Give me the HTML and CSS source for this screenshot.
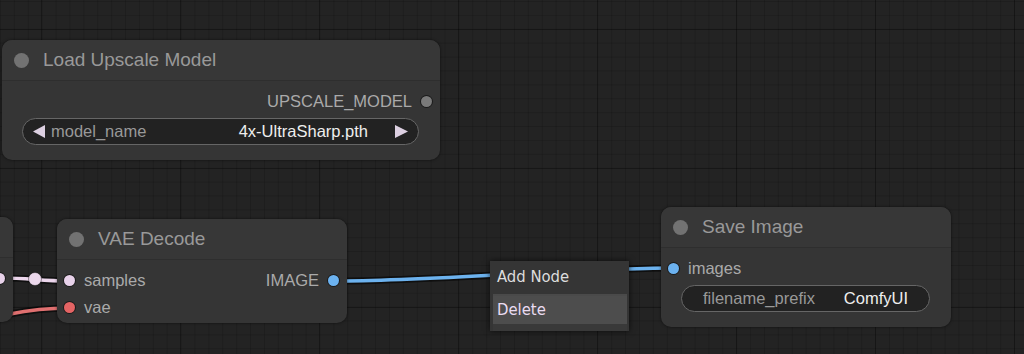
FILE: index.html
```html
<!DOCTYPE html>
<html lang="en">
  <head>
    <meta charset="UTF-8" />
    <meta name="viewport" content="width=device-width, initial-scale=1.0" />
    <title>ComfyUI Graph</title>
    <link rel="stylesheet" href="styles.css">
  </head>
  <body>
    <div class="canvas">
      <!-- links between node slots -->
      <svg class="links" width="1024" height="354" viewBox="0 0 1024 354">
        <path class="link-shadow" d="M 334 281 C 430 281, 580 268, 673 268" />
        <path class="link link-image" d="M 334 281 C 430 281, 580 268, 673 268" />
        <path class="link-shadow" d="M 1 278 C 30 278, 40 281, 69 281" />
        <path class="link link-latent" d="M 1 278 C 30 278, 40 281, 69 281" />
        <circle class="link-center" cx="35" cy="279" r="6.5" />
        <path class="link-shadow" d="M -90 340 C 0 314, 30 308, 69 308" />
        <path class="link link-vae" d="M -90 340 C 0 314, 30 308, 69 308" />
      </svg>

      <div class="node node-cut">
        <div class="node-title"></div>
        <div class="node-body">
          <div class="slot slot-out"><span class="dot dot-latent"></span></div>
        </div>
      </div>

      <div class="node node-upscale">
        <div class="node-title"><span class="title-dot"></span>Load Upscale Model</div>
        <div class="node-body">
          <div class="slot slot-out">UPSCALE_MODEL<span class="dot dot-grey"></span></div>
          <div class="widget combo">
            <svg class="arrow" width="12" height="13" viewBox="0 0 12 13"><polygon points="12,0 12,13 0,6.5" /></svg>
            <span class="w-label">model_name</span>
            <span class="w-value">4x-UltraSharp.pth</span>
            <svg class="arrow" width="13" height="13" viewBox="0 0 13 13"><polygon points="0,0 0,13 13,6.5" /></svg>
          </div>
        </div>
      </div>

      <div class="node node-vae">
        <div class="node-title"><span class="title-dot"></span>VAE Decode</div>
        <div class="node-body slots">
          <div class="slot-col">
            <div class="slot slot-in"><span class="dot dot-latent"></span>samples</div>
            <div class="slot slot-in"><span class="dot dot-vae"></span>vae</div>
          </div>
          <div class="slot-col">
            <div class="slot slot-out">IMAGE<span class="dot dot-image"></span></div>
          </div>
        </div>
      </div>

      <div class="node node-save">
        <div class="node-title"><span class="title-dot"></span>Save Image</div>
        <div class="node-body">
          <div class="slot slot-in"><span class="dot dot-image"></span>images</div>
          <div class="widget text">
            <span class="w-label">filename_prefix</span>
            <span class="w-value">ComfyUI</span>
          </div>
        </div>
      </div>

      <div class="context-menu">
        <div class="menu-item">Add Node</div>
        <div class="menu-item active">Delete</div>
      </div>
    </div>
  </body>
</html>
```

FILE: styles.css
```css
/* Canvas */
body {
  margin: 0;
  padding: 0;
  background-color: #222;
  font-family: "Liberation Sans", Arial, sans-serif;
  overflow: hidden;
}
.canvas {
  position: relative;
  width: 1024px;
  height: 354px;
  overflow: hidden;
  background-color: #232323;
  background-image:
    linear-gradient(90deg, rgba(0, 0, 0, 0.28) 1px, transparent 1px),
    linear-gradient(0deg, rgba(0, 0, 0, 0.28) 1px, transparent 1px),
    linear-gradient(90deg, rgba(0, 0, 0, 0.14) 1px, transparent 1px),
    linear-gradient(0deg, rgba(0, 0, 0, 0.14) 1px, transparent 1px);
  background-size: 139px 139px, 139px 139px, 13.9px 13.9px, 13.9px 13.9px;
  background-position: 41px 30px, 41px 30px, 0 2px, 0 2px;
}

/* Links */
.links {
  position: absolute;
  left: 0;
  top: 0;
}
.link,
.link-shadow {
  fill: none;
  stroke-linecap: round;
}
.link-shadow {
  stroke: rgba(0, 0, 0, 0.55);
  stroke-width: 7;
}
.link {
  stroke-width: 3.5;
}
.link-image {
  stroke: #6cb2ee;
}
.link-latent {
  stroke: #ecd6ec;
}
.link-vae {
  stroke: #e07070;
}
.link-center {
  fill: #ecd8ec;
  stroke: rgba(0, 0, 0, 0.4);
  stroke-width: 1;
}

/* Nodes */
.node {
  position: absolute;
  box-sizing: border-box;
  background-color: #353535;
  border-radius: 10px;
  box-shadow: 0 0 3px rgba(0, 0, 0, 0.6);
  color: #aaa;
}
.node-cut {
  left: -290px;
  top: 217px;
  width: 303px;
  height: 105px;
}
.node-upscale {
  left: 2px;
  top: 40px;
  width: 438px;
  height: 120px;
}
.node-vae {
  left: 57px;
  top: 219px;
  width: 290px;
  height: 104px;
}
.node-save {
  left: 661px;
  top: 207px;
  width: 290px;
  height: 120px;
}
.node-title {
  display: flex;
  align-items: center;
  gap: 14px;
  height: 40px;
  padding-left: 12px;
  border-bottom: 1px solid #2e2e2e;
  border-radius: 10px 10px 0 0;
  background-color: #373737;
  color: #999;
  font-size: 19px;
}
.title-dot {
  width: 15px;
  height: 15px;
  border-radius: 50%;
  background-color: #727272;
}
.node-body {
  padding-top: 7px;
}
.slots {
  display: flex;
  justify-content: space-between;
}

/* Slots */
.slot {
  display: flex;
  align-items: center;
  height: 27px;
  font-size: 16.5px;
  color: #aaa;
}
.slot-in {
  padding-left: 7px;
  gap: 9px;
}
.slot-out {
  justify-content: flex-end;
  padding-right: 8px;
  gap: 9px;
}
.dot {
  width: 11px;
  height: 11px;
  border-radius: 50%;
  box-shadow: 0 0 0 1px rgba(0, 0, 0, 0.5);
}
.dot-grey {
  background-color: #7a7a7a;
}
.dot-latent {
  background-color: #e8d2ea;
}
.dot-vae {
  background-color: #e46464;
}
.dot-image {
  background-color: #6cb2f0;
}

/* Widgets */
.widget {
  display: flex;
  align-items: center;
  box-sizing: border-box;
  height: 27px;
  margin: 3px 21px 0 20px;
  border: 1px solid #666;
  border-radius: 14px;
  background-color: #222;
  font-size: 16.5px;
}
.widget.combo {
  padding: 0 10px;
}
.widget.text {
  padding: 0 21px;
}
.w-label {
  flex: 1;
  color: #999;
}
.w-value {
  color: #eee;
}
.combo .w-label {
  margin-left: 6px;
}
.combo .w-value {
  margin-right: 27px;
}
.arrow polygon {
  fill: #ddd0e2;
}

/* Context menu */
.context-menu {
  position: absolute;
  left: 490px;
  top: 261px;
  box-sizing: border-box;
  width: 139px;
  height: 70px;
  padding: 2px 2px 0 3px;
  background-color: #353535;
  box-shadow: 0 0 6px rgba(0, 0, 0, 0.7);
  font-family: "DejaVu Sans Condensed", "DejaVu Sans", sans-serif;
  font-stretch: condensed;
  font-size: 16.5px;
}
.menu-item {
  box-sizing: border-box;
  height: 33px;
  line-height: 27px;
  padding-left: 4px;
  color: #ddd;
  border-bottom: 2px solid #4a4a4a;
}
.menu-item.active {
  height: 35px;
  line-height: 28px;
  background-color: #4d4d4d;
  border-bottom: 7px solid #393939;
  color: #eadcf2;
}
```
